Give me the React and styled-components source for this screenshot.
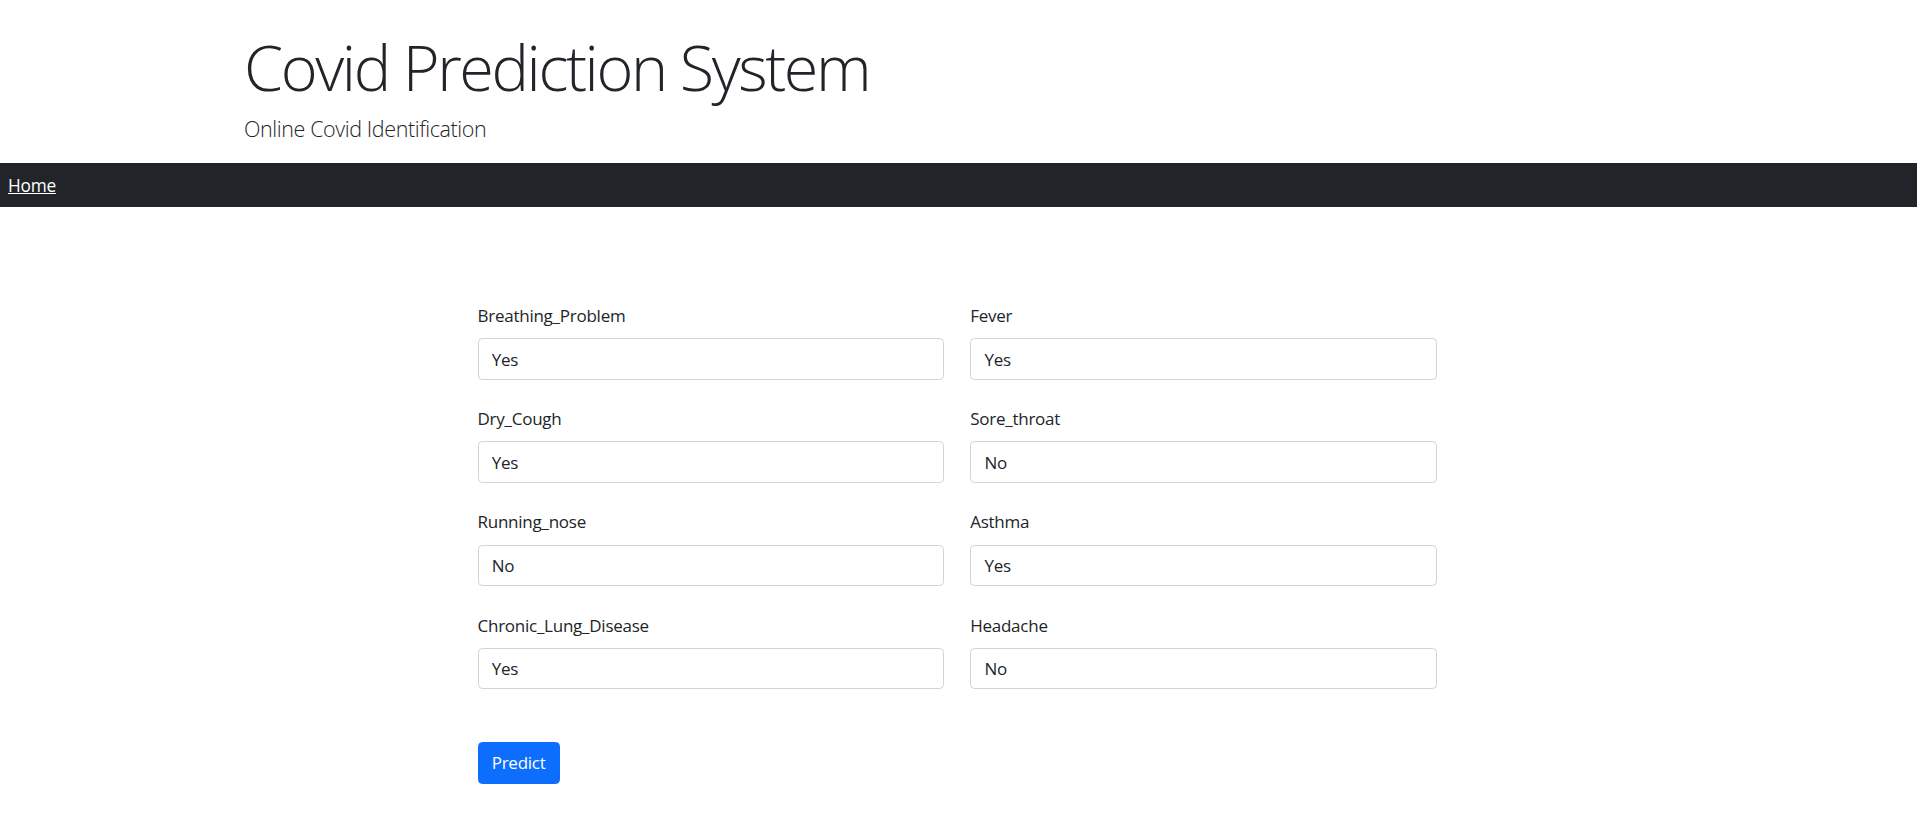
import React from "react";
import styled, { createGlobalStyle } from "styled-components";

const GlobalStyle = createGlobalStyle`
  body {
    margin: 0;
    font-family: "Open Sans", "Noto Sans", sans-serif;
    font-size: 17px;
    letter-spacing: -0.25px;
    color: #212529;
    background: #fff;
  }
`;

const Header = styled.header`
  box-sizing: border-box;
  padding: 29px 0 0 244px;
  height: 163px;
`;

const Title = styled.h1`
  margin: 0 0 8px;
  font-size: 63px;
  font-weight: 300;
  line-height: 1.2;
  letter-spacing: -2.4px;
`;

const Lead = styled.p`
  margin: 0;
  font-size: 21.5px;
  font-weight: 300;
  line-height: 1.5;
  letter-spacing: -0.4px;
`;

const NavBar = styled.nav`
  display: flex;
  align-items: center;
  height: 44px;
  padding-left: 8px;
  background: #212529;
`;

const NavLink = styled.a`
  color: #fff;
  font-size: 17.3px;
  text-decoration: underline;
`;

const Main = styled.main`
  padding: 96px 3px 0 0;
  display: flex;
  justify-content: center;
`;

const Form = styled.form`
  width: 959px;
`;

const Grid = styled.div`
  display: grid;
  grid-template-columns: 1fr 1fr;
  column-gap: 26.4px;
`;

const Field = styled.div`
  margin-bottom: 26.4px;
`;

const Label = styled.label`
  display: block;
  margin-bottom: 8.8px;
  line-height: 26.4px;
`;

const Input = styled.input`
  display: block;
  box-sizing: border-box;
  width: 100%;
  height: 41.6px;
  padding: 6.6px 13.2px;
  font-family: inherit;
  font-size: 17px;
  letter-spacing: -0.25px;
  color: #212529;
  border: 1px solid #ced4da;
  border-radius: 4.4px;
  background: #fff;
`;

const Button = styled.button`
  margin-top: 26.4px;
  padding: 6.6px 13.2px;
  font-family: inherit;
  font-size: 17px;
  letter-spacing: -0.25px;
  line-height: 26.4px;
  color: #fff;
  background: #0d6efd;
  border: 1px solid #0d6efd;
  border-radius: 4.4px;
`;

const fields = [
  ["Breathing_Problem", "Yes"],
  ["Fever", "Yes"],
  ["Dry_Cough", "Yes"],
  ["Sore_throat", "No"],
  ["Running_nose", "No"],
  ["Asthma", "Yes"],
  ["Chronic_Lung_Disease", "Yes"],
  ["Headache", "No"],
];

export default function App() {
  return (
    <>
      <GlobalStyle />
      <Header>
        <Title>Covid Prediction System</Title>
        <Lead>Online Covid Identification</Lead>
      </Header>
      <NavBar>
        <NavLink href="#">Home</NavLink>
      </NavBar>
      <Main>
        <Form onSubmit={(e) => e.preventDefault()}>
          <Grid>
            {fields.map(([name, value]) => (
              <Field key={name}>
                <Label htmlFor={name}>{name}</Label>
                <Input id={name} defaultValue={value} />
              </Field>
            ))}
          </Grid>
          <Button type="submit">Predict</Button>
        </Form>
      </Main>
    </>
  );
}
